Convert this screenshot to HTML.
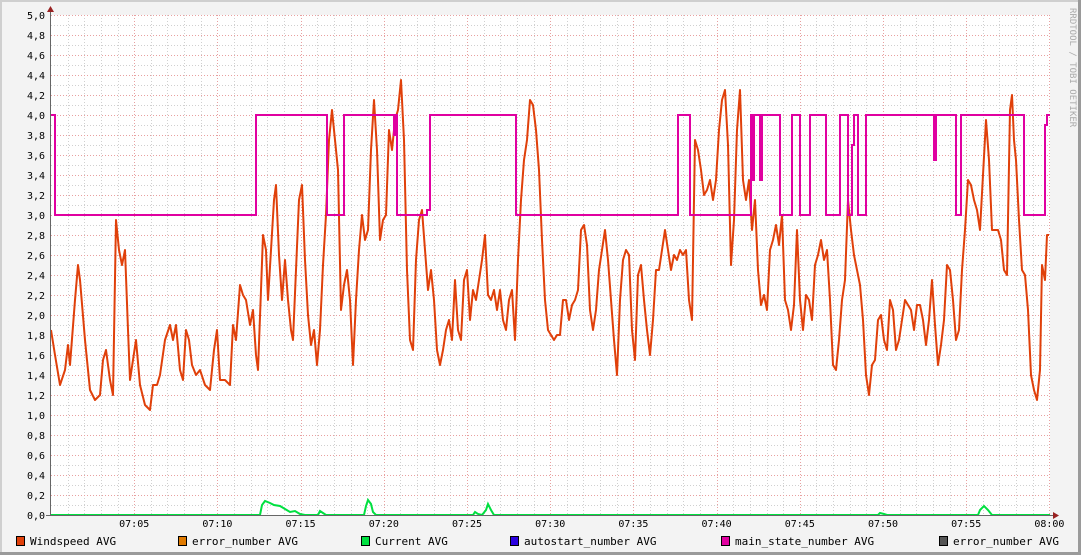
<!DOCTYPE html><html><head><meta charset="utf-8"><style>
html,body{margin:0;padding:0;background:#f3f3f3;width:1081px;height:555px;overflow:hidden}
svg{display:block}
text{font-family:"DejaVu Sans Mono","Liberation Mono",monospace;font-size:10px;fill:#000}
.lg{font-size:11px}
</style></head><body>
<svg width="1081" height="555" xmlns="http://www.w3.org/2000/svg">
<rect x="0" y="0" width="1081" height="555" fill="#f3f3f3"/>
<rect x="0" y="0" width="1081" height="2" fill="#cfcfcf"/>
<rect x="0" y="0" width="2" height="555" fill="#cfcfcf"/>
<rect x="1078" y="0" width="3" height="555" fill="#9a9a9a"/>
<rect x="0" y="552" width="1081" height="3" fill="#9a9a9a"/>
<rect x="51" y="15" width="999" height="500" fill="#fff"/>
<g id="grid"></g>
<g id="lines"></g>
<text x="1070" y="8" transform="rotate(90 1070 8)" style="font-size:9px;fill:#aaa">RRDTOOL / TOBI OETIKER</text>
<g id="yl"></g><g id="xl"></g>
<line x1="50.5" y1="10" x2="50.5" y2="516" stroke="#666"/>
<line x1="46" y1="515.5" x2="1055" y2="515.5" stroke="#666"/>
<polygon points="47,12 54,12 50.5,6" fill="#992222"/>
<polygon points="1053,512 1053,519 1059,515.5" fill="#992222"/>
<g class="lg">
<rect x="16.5" y="536.5" width="8" height="9" fill="#e0400a" stroke="#000"/><text class="lg" x="30" y="545">Windspeed AVG</text>
<rect x="178.5" y="536.5" width="8" height="9" fill="#e07a00" stroke="#000"/><text class="lg" x="192" y="545">error_number AVG</text>
<rect x="361.5" y="536.5" width="8" height="9" fill="#00e040" stroke="#000"/><text class="lg" x="375" y="545">Current AVG</text>
<rect x="510.5" y="536.5" width="8" height="9" fill="#2a00e0" stroke="#000"/><text class="lg" x="524" y="545">autostart_number AVG</text>
<rect x="721.5" y="536.5" width="8" height="9" fill="#e000a0" stroke="#000"/><text class="lg" x="735" y="545">main_state_number AVG</text>
<rect x="939.5" y="536.5" width="8" height="9" fill="#555" stroke="#000"/><text class="lg" x="953" y="545">error_number AVG</text>
</g>
</svg>
<script>
var NS="http://www.w3.org/2000/svg";
function el(p,t,a,txt){var e=document.createElementNS(NS,t);for(var k in a)e.setAttribute(k,a[k]);if(txt)e.textContent=txt;document.getElementById(p).appendChild(e);return e;}
var x0=51,ppm=16.64;
for(var i=1;i<=60;i++){var x=Math.round(x0+i*ppm)+0.5;var maj=i%5==0;el("grid","line",{x1:x,y1:15,x2:x,y2:515,stroke:maj?"#e8a0a0":"#d0d0d0","stroke-dasharray":"1,2"});}
for(var j=1;j<=50;j++){var y=515-j*10+0.5;var maj=j%2==0;el("grid","line",{x1:51,y1:y,x2:1050,y2:y,stroke:maj?"#e8a0a0":"#d0d0d0","stroke-dasharray":"1,2"});}
for(var j=0;j<=25;j++){var v=(j*0.2).toFixed(1).replace(".",",");el("yl","text",{x:45,y:515-j*20+4,"text-anchor":"end"},v);}
for(var i=5;i<=60;i+=5){var h=7+Math.floor(i/60),m=i%60;var s="0"+h+":"+(m<10?"0":"")+m;el("xl","text",{x:x0+i*ppm,y:527,"text-anchor":"middle"},s);}
var w=[51,330,55,355,60,385,65,370,68,345,70,365,75,300,78,265,80,280,85,340,90,390,95,400,100,395,103,360,106,350,110,380,113,395,116,220,119,250,122,265,125,250,128,330,130,380,133,360,136,340,140,385,145,405,150,410,153,385,157,385,160,375,165,340,170,325,173,340,176,325,180,370,183,380,186,330,189,340,192,365,196,375,200,370,205,385,210,390,214,350,217,330,220,380,225,380,230,385,233,325,236,340,240,285,243,295,246,300,250,325,253,310,256,355,258,370,261,290,263,235,266,250,268,300,271,250,274,200,276,185,279,255,282,300,285,260,288,300,291,330,293,340,296,270,299,200,302,185,305,260,308,315,311,345,314,330,317,365,320,330,323,265,326,215,329,140,332,110,335,140,338,170,341,310,344,285,347,270,350,300,353,365,356,300,359,250,362,215,365,240,368,230,371,150,374,100,377,150,380,240,383,220,386,215,389,130,392,150,395,120,398,110,401,80,404,140,407,270,410,340,413,350,416,260,419,220,422,210,425,250,428,290,431,270,434,300,437,350,440,365,443,350,446,330,449,320,452,340,455,280,458,330,461,340,464,280,467,270,470,320,473,290,476,300,479,280,482,260,485,235,488,295,491,300,494,290,497,310,500,290,503,320,506,330,509,300,512,290,515,340,518,260,521,200,524,160,527,140,530,100,533,105,536,130,539,170,542,240,545,300,548,330,551,335,554,340,557,335,560,335,563,300,566,300,569,320,572,305,575,300,578,290,581,230,584,225,587,245,590,310,593,330,596,310,599,270,602,250,605,230,608,260,611,300,614,340,617,375,620,300,623,260,626,250,629,255,632,330,635,360,638,275,641,265,644,300,647,330,650,355,653,320,656,270,659,270,662,250,665,230,668,250,671,270,674,255,677,260,680,250,683,255,686,250,689,300,692,320,695,140,698,150,701,170,704,195,707,190,710,180,713,200,716,180,719,130,722,100,725,90,728,145,731,265,734,220,737,130,740,90,743,180,746,200,749,180,752,230,755,200,758,270,761,305,764,295,767,310,770,250,773,240,776,225,779,245,782,215,785,300,788,310,791,330,794,305,797,230,800,300,803,330,806,295,809,300,812,320,815,265,818,255,821,240,824,260,827,250,830,300,833,365,836,370,839,340,842,300,845,280,848,200,851,230,854,255,857,270,860,285,863,320,866,375,869,395,872,365,875,360,878,320,881,315,884,340,887,350,890,300,893,310,896,350,899,340,902,320,905,300,908,305,911,310,914,330,917,305,920,305,923,320,926,345,929,320,932,280,935,325,938,365,941,345,944,320,947,265,950,270,953,300,956,340,959,330,962,270,965,230,968,180,971,185,974,200,977,210,980,230,983,175,986,120,989,160,992,230,995,230,998,230,1001,240,1004,270,1007,275,1010,110,1012,95,1014,140,1016,160,1019,220,1022,270,1025,275,1028,310,1031,375,1034,390,1037,400,1040,370,1042,265,1045,280,1047,235,1049,235];
var pts="";for(var i=0;i<w.length;i+=2)pts+=w[i]+","+w[i+1]+" ";
el("lines","polyline",{points:pts,fill:"none",stroke:"#e0400a","stroke-width":2,"stroke-linejoin":"round"});
// main state steps: [x, level]
var ms=[[51,4],[55,3],[256,4],[327,3],[344,4],[394,3.8],[396,4],[397,3],[427,3.05],[430,4],[516,3],[678,4],[690,3],[751,4],[753,3.35],[754,4],[760,3.35],[762,4],[780,3],[792,4],[800,3],[810,4],[826,3],[840,4],[848,3],[852,3.7],[854,4],[858,3],[866,4],[934,3.55],[936,4],[956,3],[961,4],[1024,3],[1045,3.9],[1047,4],[1050,4]];
var p="M"+ms[0][0]+","+(515-ms[0][1]*100);
for(var i=1;i<ms.length;i++){var y=515-ms[i-1][1]*100;p+=" L"+ms[i][0]+","+y+" L"+ms[i][0]+","+(515-ms[i][1]*100);}
el("lines","path",{d:p,fill:"none",stroke:"#e000a0","stroke-width":2});
var c=[51,515,260,515,262,505,265,501,270,503,274,505,280,506,285,509,290,512,295,511,300,514,305,515,318,515,320,511,323,513,326,515,364,515,366,506,368,500,371,504,373,512,376,515,473,515,475,512,478,514,482,515,486,510,488,504,491,510,494,515,878,515,880,513,884,514,887,515,978,515,980,510,984,506,988,510,992,515,1050,515];
var cp="";for(var i=0;i<c.length;i+=2)cp+=c[i]+","+c[i+1]+" ";
el("lines","polyline",{points:cp,fill:"none",stroke:"#00e040","stroke-width":2});
</script>
</body></html>
